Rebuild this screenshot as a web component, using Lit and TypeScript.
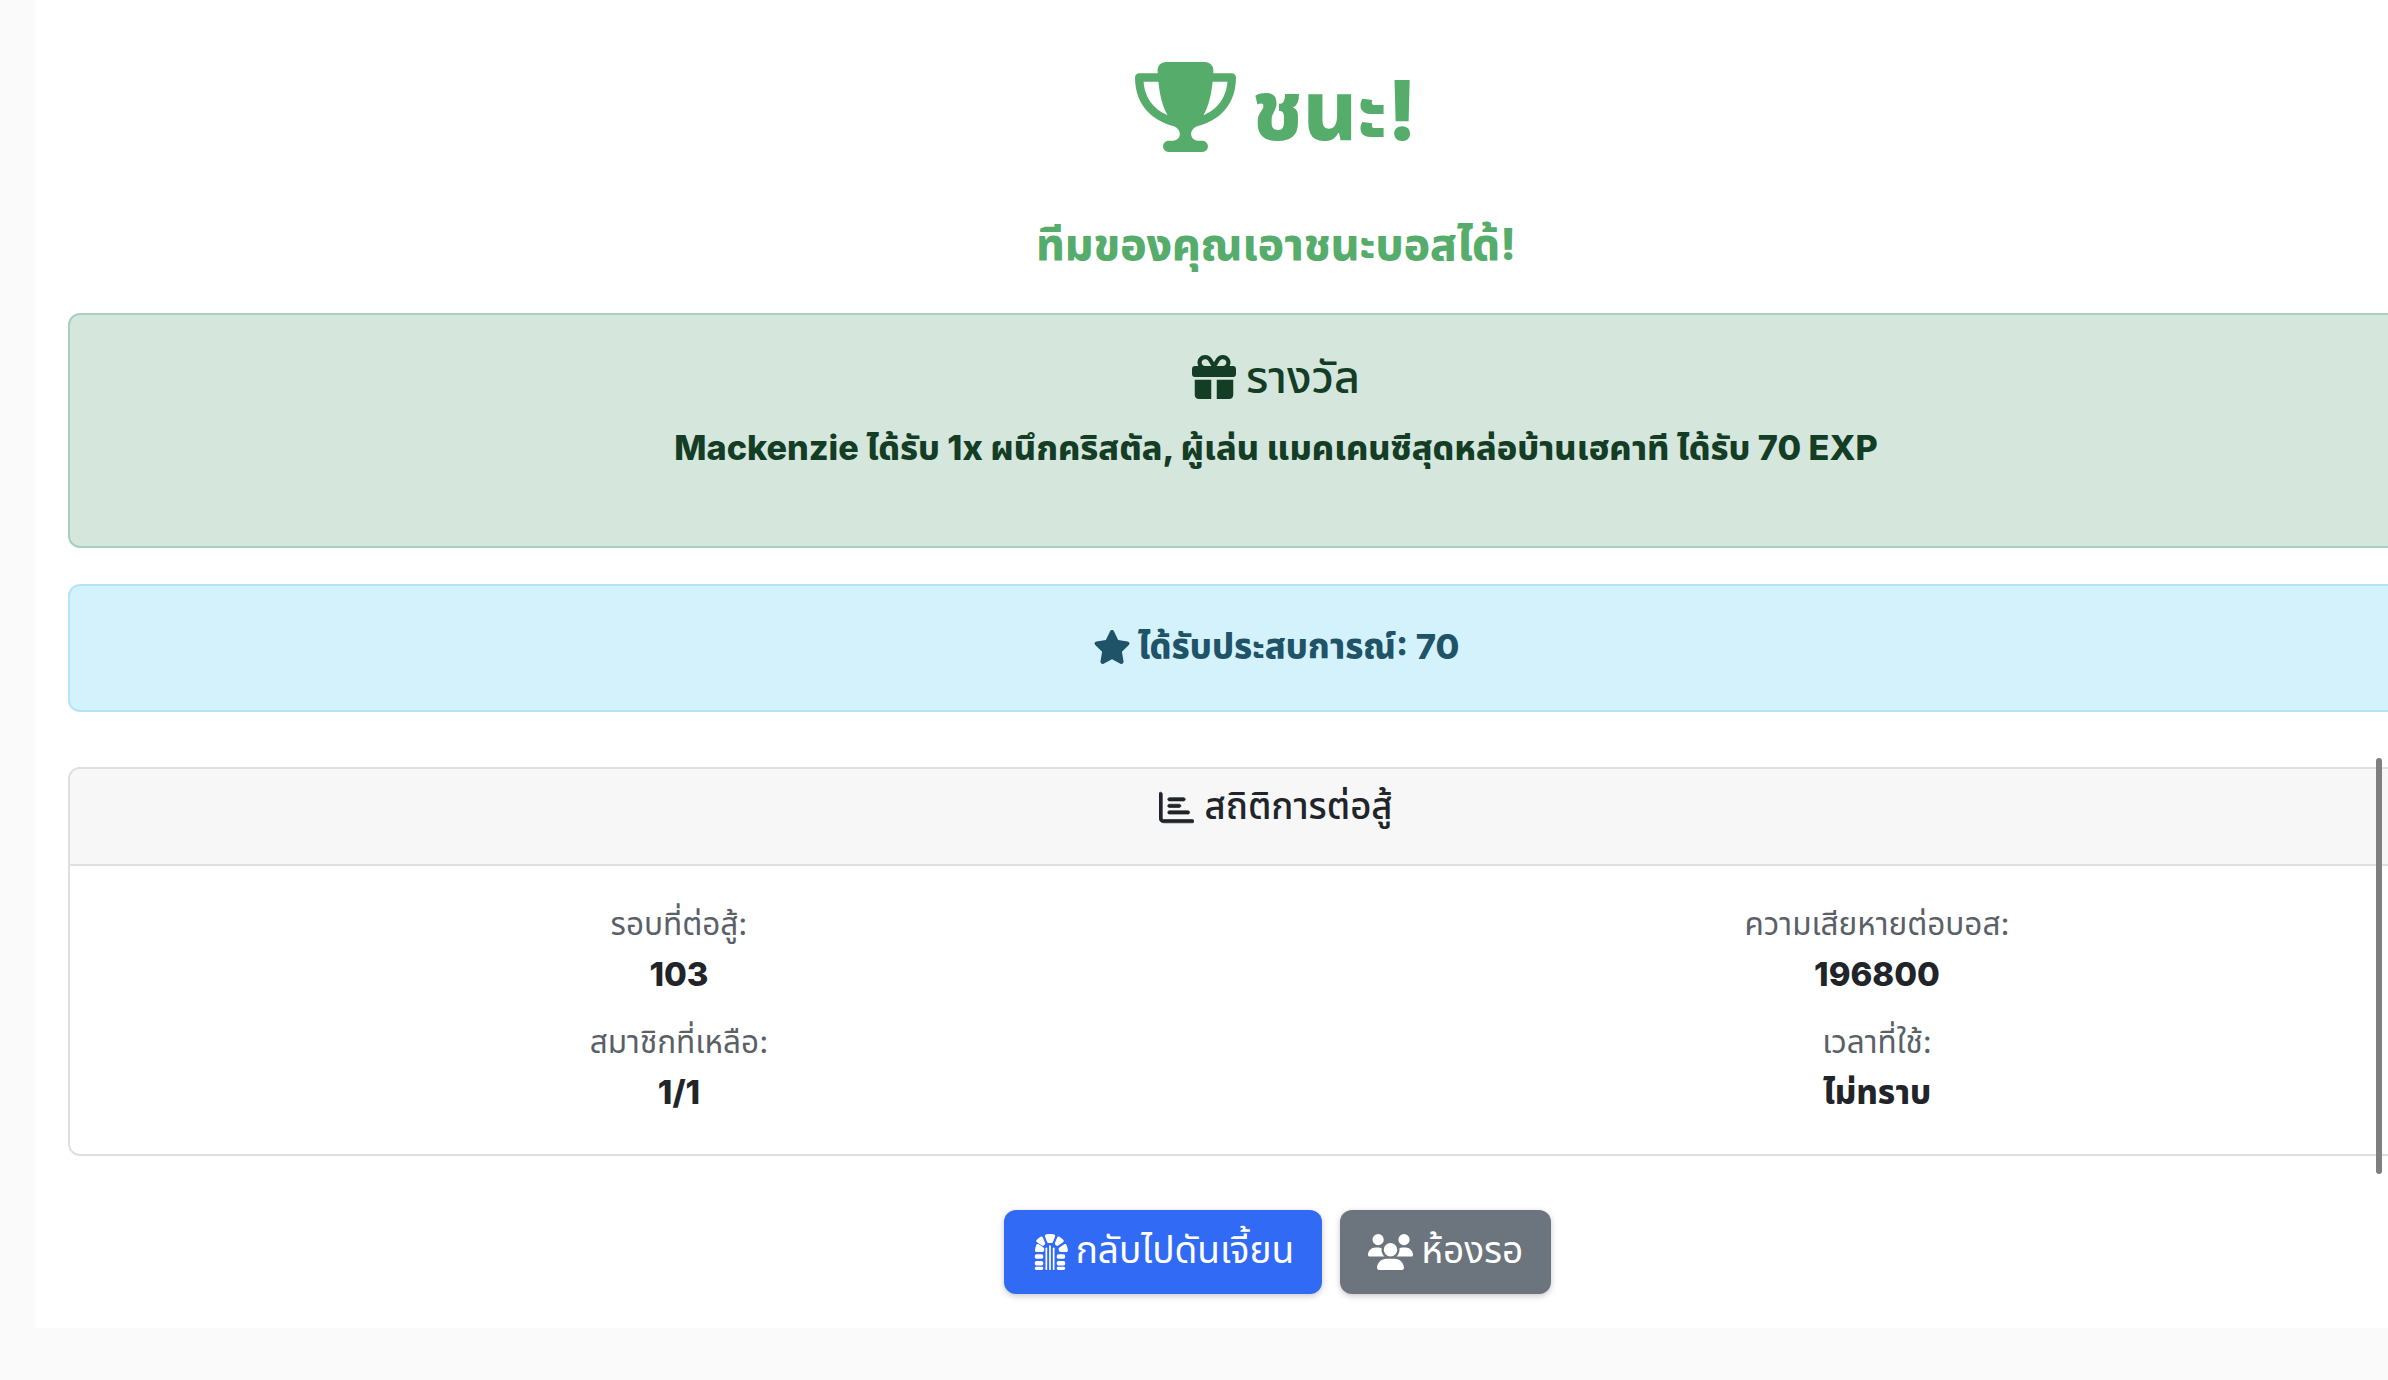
import { LitElement, html, css, svg } from "lit";
import { customElement } from "lit/decorators.js";

const trophy = svg`<path d="M400 0H176c-26.5 0-48.1 21.8-47.1 48.2c.2 5.3 .4 10.6 .7 15.8H24C10.7 64 0 74.7 0 88c0 92.6 33.5 157 78.5 200.7c44.3 43.1 98.3 64.8 138.1 75.8c23.4 6.5 39.4 26 39.4 45.6c0 20.9-17 37.9-37.9 37.9H192c-17.7 0-32 14.3-32 32s14.3 32 32 32H384c17.7 0 32-14.3 32-32s-14.3-32-32-32H357.9C337 448 320 431 320 410.1c0-19.6 15.9-39.2 39.4-45.6c39.9-11 93.9-32.7 138.2-75.8C542.5 245 576 180.6 576 88c0-13.3-10.7-24-24-24H446.4c.3-5.2 .5-10.4 .7-15.8C448.1 21.8 426.5 0 400 0zM48.9 112h84.4c9.1 90.1 29.2 150.3 51.9 190.6c-24.9-11-50.8-26.5-73.2-48.3c-32-31.1-58-76-63-142.3zM464.1 254.3c-22.4 21.8-48.3 37.3-73.2 48.3c22.7-40.3 42.8-100.5 51.9-190.6h84.4c-5.1 66.3-31.1 111.2-63 142.3z"/>`;
const gift = svg`<path d="M190.5 68.8L225.3 128H224 152c-22.1 0-40-17.9-40-40s17.9-40 40-40h2.2c14.9 0 28.8 7.9 36.3 20.8zM64 88c0 14.4 3.5 28 9.6 40H32c-17.7 0-32 14.3-32 32v64c0 17.7 14.3 32 32 32H480c17.7 0 32-14.3 32-32V160c0-17.7-14.3-32-32-32H438.4c6.1-12 9.6-25.6 9.6-40c0-48.6-39.4-88-88-88h-2.2c-31.9 0-61.5 16.9-77.7 44.4L256 85.5l-24.1-41C215.7 16.9 186.1 0 154.2 0H152C103.4 0 64 39.4 64 88zm336 0c0 22.1-17.9 40-40 40H288h-1.3l34.8-59.2C329.1 55.9 342.9 48 357.8 48H360c22.1 0 40 17.9 40 40zM32 288V464c0 26.5 21.5 48 48 48H224V288H32zM288 512H432c26.5 0 48-21.5 48-48V288H288V512z"/>`;
const star = svg`<path d="M316.9 18C311.6 7 300.4 0 288.1 0s-23.4 7-28.8 18L195 150.3 51.4 171.5c-12 1.8-22 10.2-25.7 21.7s-.7 24.2 7.9 32.7L137.8 329 113.2 474.7c-2 12 3 24.2 12.9 31.3s23 8 33.8 2.3l128.3-68.5 128.3 68.5c10.8 5.7 23.9 4.9 33.8-2.3s14.9-19.3 12.9-31.3L438.5 329 542.7 225.9c8.6-8.5 11.7-21.2 7.9-32.7s-13.7-19.9-25.7-21.7L381.2 150.3 316.9 18z"/>`;
const chart = svg`<path d="M24 32c13.3 0 24 10.7 24 24V408c0 13.3 10.7 24 24 24H488c13.3 0 24 10.7 24 24s-10.7 24-24 24H72c-39.8 0-72-32.2-72-72V56C0 42.7 10.7 32 24 32zM128 136c0-13.3 10.7-24 24-24l208 0c13.3 0 24 10.7 24 24s-10.7 24-24 24l-208 0c-13.3 0-24-10.7-24-24zm24 72H296c13.3 0 24 10.7 24 24s-10.7 24-24 24H152c-13.3 0-24-10.7-24-24s10.7-24 24-24zm0 96H424c13.3 0 24 10.7 24 24s-10.7 24-24 24H152c-13.3 0-24-10.7-24-24s10.7-24 24-24z"/>`;
const users = svg`<path d="M144 0a80 80 0 1 1 0 160A80 80 0 1 1 144 0zM512 0a80 80 0 1 1 0 160A80 80 0 1 1 512 0zM0 298.7C0 239.8 47.8 192 106.7 192h42.7c15.9 0 31 3.5 44.6 9.7c-1.3 7.2-1.9 14.7-1.9 22.3c0 38.2 16.8 72.5 43.3 96c-.2 0-.4 0-.7 0H21.3C9.6 320 0 310.4 0 298.7zM405.3 320c-.2 0-.4 0-.7 0c26.6-23.5 43.3-57.8 43.3-96c0-7.6-.7-15-1.9-22.3c13.6-6.3 28.7-9.7 44.6-9.7h42.7C592.2 192 640 239.8 640 298.7c0 11.8-9.6 21.3-21.3 21.3H405.3zM224 224a96 96 0 1 1 192 0 96 96 0 1 1 -192 0zM128 485.3C128 411.7 187.7 352 261.3 352H378.7C452.3 352 512 411.7 512 485.3c0 14.7-11.9 26.7-26.7 26.7H154.7c-14.7 0-26.7-11.9-26.7-26.7z"/>`;
const dungeon = svg`<path d="M336.6 156.5c1.3 1.1 2.7 2.2 3.9 3.3c9.3 8.2 23 10.5 33.4 3.6l67.6-45.1c11.4-7.6 14.2-23.2 5.1-33.4C430 66.6 410.9 50.6 389.7 37.6c-11.9-7.3-26.9-1.4-32.1 11.6l-30.5 76.2c-4.5 11.1 .2 23.6 9.5 31.2zM328 36.8c5.1-12.8-1.6-27.4-15-30.5C294.7 2.2 275.6 0 256 0s-38.7 2.2-57 6.4C185.5 9.4 178.8 24 184 36.8l30.3 75.8c4.5 11.3 16.8 17.2 29 16c4.2-.4 8.5-.6 12.8-.6s8.6 .2 12.8 .6c12.1 1.2 24.4-4.7 29-16L328 36.8zM65.5 85c-9.1 10.2-6.3 25.8 5.1 33.4l67.6 45.1c10.3 6.9 24.1 4.6 33.4-3.6c1.3-1.1 2.6-2.3 4-3.3c9.3-7.5 13.9-20.1 9.5-31.2L154.4 49.2c-5.2-12.9-20.3-18.8-32.1-11.6C101.1 50.6 82 66.6 65.5 85z"/>
<path d="M379.5 222.1c.9 3.3 1.7 6.6 2.3 10c2.5 13 13 23.9 26.2 23.9h80c13.3 0 24.1-10.8 22.9-24c-2.5-27.2-9.3-53.2-19.7-77.3c-5.5-12.9-21.4-16.6-33.1-8.9l-68.6 45.7c-9.8 6.5-13.5 19.2-9.9 30.6zM94.2 146.7c-11.7-7.8-27.6-4-33.1 8.9c-10.4 24.1-17.1 50.1-19.7 77.3C40.1 246.2 50.9 257 64.2 257h80c13.2 0 23.7-10.9 26.2-23.9c.7-3.4 1.4-6.7 2.3-10c3.5-11.4-.1-24.1-10-30.6L94.2 146.7z"/>
<rect x="40" y="288" width="120" height="64" rx="24"/><rect x="352" y="288" width="120" height="64" rx="24"/>
<rect x="40" y="384" width="120" height="64" rx="24"/><rect x="352" y="384" width="120" height="64" rx="24"/>
<rect x="40" y="464" width="120" height="48" rx="20"/><rect x="352" y="464" width="120" height="48" rx="20"/>
<rect x="192" y="192" width="24" height="320" rx="12"/><rect x="244" y="160" width="24" height="352" rx="12"/><rect x="296" y="192" width="24" height="320" rx="12"/>`;

@customElement("app-root")
export class AppRoot extends LitElement {
  static styles = css`
    :host { display: block; width: 2388px; height: 1380px; overflow: hidden; background: #fafafa; position: relative;
      font-family: "Inter", "Noto Sans Thai", "Noto Sans", sans-serif; color: #212529; }
    .sheet { width: 2483px; margin-left: 35px; background: #fff; height: 1328px; box-sizing: border-box; padding: 0 0 0 33px; }
    .inner { width: 2416px; display: flex; flex-direction: column; align-items: stretch; }
    svg { fill: currentColor; display: block; flex: none; }
    .title { display: flex; justify-content: center; align-items: center; gap: 16px; color: #56ad6b; height: 152px; padding-top: 62px; box-sizing: border-box; font-size: 83px; font-weight: 800; line-height: 1; }
    .title svg { width: 101px; height: 90px; }
    .title span { padding-top: 6px; }
    .sub { text-align: center; color: #56ad6b; font-size: 44px; font-weight: 800; line-height: 56px; margin: 64px 0 41px; }
    .alert { box-sizing: border-box; border-radius: 12px; border: 2px solid; text-align: center; }
    .win { height: 235px; background: #d5e6dd; border-color: #a8d0bd; color: #143d26; padding-top: 34px; }
    .win h4 { margin: 0; font-size: 45px; font-weight: 500; line-height: 56px; display: flex; justify-content: center; align-items: center; gap: 10px; }
    .win h4 svg { width: 44px; height: 44px; }
    .win p { margin: 15px 0 0; font-size: 34.2px; font-weight: 800; line-height: 56px; }
    .xp { height: 128px; margin-top: 36px; background: #d4f2fb; border-color: #b0e6f5; color: #1f5368; font-size: 34.5px; font-weight: 800; display: flex; justify-content: center; align-items: center; gap: 7px; }
    .xp svg { width: 38px; height: 34px; margin-top: -2px; }
    .card { margin-top: 55px; height: 389px; box-sizing: border-box; border: 2px solid #dfdfdf; border-radius: 12px; overflow: hidden; display: flex; flex-direction: column; }
    .head { height: 97px; box-sizing: border-box; background: #f7f7f7; border-bottom: 2px solid #dfdfdf; display: flex; justify-content: center; align-items: center; gap: 10px; font-size: 36.5px; font-weight: 500; padding-bottom: 18px; }
    .head svg { width: 35px; height: 35px; stroke: currentColor; stroke-width: 10px; }
    .grid { display: grid; grid-template-columns: 1198px 1198px; padding: 33px 10px 0; grid-auto-rows: 118px; }
    .stat { text-align: center; }
    .label { font-size: 31.5px; line-height: 50px; color: #5a6068; }
    .value { font-size: 33px; font-weight: 800; line-height: 50px; color: #212529; }
    .actions { display: flex; justify-content: center; gap: 18px; margin-top: 54px; padding-left: 3px; }
    .btn { height: 84px; box-sizing: border-box; border-radius: 12px; color: #fff; display: flex; align-items: center; gap: 8px; font-size: 37px; padding: 0 28px; box-shadow: 0 2px 6px rgba(0,0,0,.22); }
    .btn.p { background: #316bf5; }
    .btn.s { background: #6c757d; }
    .btn svg { height: 36px; }
    .bar { position: absolute; left: 2376px; top: 758px; width: 6px; height: 416px; border-radius: 3px; background: #7f7f7f; }
  `;

  render() {
    const stats = [
      ["รอบที่ต่อสู้:", "103"],
      ["ความเสียหายต่อบอส:", "196800"],
      ["สมาชิกที่เหลือ:", "1/1"],
      ["เวลาที่ใช้:", "ไม่ทราบ"],
    ];
    return html`
      <div class="sheet"><div class="inner">
        <div class="title"><svg viewBox="0 0 576 512">${trophy}</svg><span>ชนะ!</span></div>
        <div class="sub">ทีมของคุณเอาชนะบอสได้!</div>
        <div class="alert win">
          <h4><svg viewBox="0 0 512 512">${gift}</svg><span>รางวัล</span></h4>
          <p>Mackenzie ได้รับ 1x ผนึกคริสตัล, ผู้เล่น แมคเคนซีสุดหล่อบ้านเฮคาที ได้รับ 70 EXP</p>
        </div>
        <div class="alert xp"><svg viewBox="0 0 576 512">${star}</svg><span>ได้รับประสบการณ์: 70</span></div>
        <div class="card">
          <div class="head"><svg viewBox="0 0 512 512">${chart}</svg><span>สถิติการต่อสู้</span></div>
          <div class="grid">
            ${stats.map(([l, v]) => html`<div class="stat"><div class="label">${l}</div><div class="value">${v}</div></div>`)}
          </div>
        </div>
        <div class="actions">
          <div class="btn p"><svg viewBox="0 0 512 512" style="width:36px">${dungeon}</svg><span>กลับไปดันเจี้ยน</span></div>
          <div class="btn s"><svg viewBox="0 0 640 512" style="width:45px">${users}</svg><span>ห้องรอ</span></div>
        </div>
      </div></div>
      <div class="bar"></div>
    `;
  }
}
